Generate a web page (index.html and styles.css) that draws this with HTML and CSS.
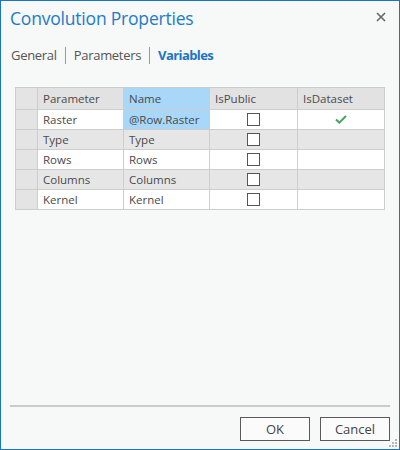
FILE: index.html
```html
<!DOCTYPE html>
<html>
<head>
<meta charset="utf-8">
<link rel="stylesheet" href="styles.css">
</head>
<body>
<div class="window">
  <div class="titlebar">
    <div class="title">Convolution Properties</div>
    <svg class="close" width="10" height="10" viewBox="0 0 10 10"><path d="M1 1L9 9M9 1L1 9" stroke="#666" stroke-width="1.6"/></svg>
  </div>
  <div class="tabs">
    <span class="tab">General</span>
    <span class="sep"></span>
    <span class="tab">Parameters</span>
    <span class="sep"></span>
    <span class="tab active">Variables</span>
  </div>
  <div class="gridwrap">
    <table class="grid">
      <thead>
        <tr><th class="rh"></th><th>Parameter</th><th class="sel">Name</th><th>IsPublic</th><th>IsDataset</th></tr>
      </thead>
      <tbody>
        <tr><td class="rh"></td><td>Raster</td><td class="sel">@Row.Raster</td><td class="c"><span class="cb"></span></td><td class="c"><svg width="12" height="9" viewBox="0 0 12 9"><path d="M1 4.5L4.3 7.6L11 1" fill="none" stroke="#4aa05e" stroke-width="2"/></svg></td></tr>
        <tr class="alt"><td class="rh"></td><td>Type</td><td>Type</td><td class="c"><span class="cb"></span></td><td></td></tr>
        <tr><td class="rh"></td><td>Rows</td><td>Rows</td><td class="c"><span class="cb"></span></td><td></td></tr>
        <tr class="alt"><td class="rh"></td><td>Columns</td><td>Columns</td><td class="c"><span class="cb"></span></td><td></td></tr>
        <tr><td class="rh"></td><td>Kernel</td><td>Kernel</td><td class="c"><span class="cb"></span></td><td></td></tr>
      </tbody>
    </table>
  </div>
  <div class="spacer"></div>
  <div class="divider"></div>
  <div class="footer">
    <button class="btn">OK</button>
    <button class="btn">Cancel</button>
  </div>
  <svg class="grip" width="9" height="9" viewBox="0 0 9 9">
    <rect x="6" y="0" width="2" height="2" fill="#b8b8b8"/>
    <rect x="3" y="3" width="2" height="2" fill="#b8b8b8"/>
    <rect x="6" y="3" width="2" height="2" fill="#b8b8b8"/>
    <rect x="0" y="6" width="2" height="2" fill="#b8b8b8"/>
    <rect x="3" y="6" width="2" height="2" fill="#b8b8b8"/>
    <rect x="6" y="6" width="2" height="2" fill="#b8b8b8"/>
  </svg>
</div>
</body>
</html>
```
FILE: styles.css
```css
* { box-sizing: border-box; }
html, body { margin: 0; padding: 0; }
body { font-family: "Open Sans", "Noto Sans", sans-serif; color: #3c3c3c; }
.window {
  position: relative;
  width: 400px;
  height: 450px;
  border: 1px solid #1b74c5;
  background: #f7f8f8;
  display: flex;
  flex-direction: column;
}
.titlebar {
  display: flex;
  justify-content: space-between;
  align-items: center;
  padding: 3px 13px 0 9px;
  height: 30px;
}
.title {
  font-size: 17.5px;
  color: #1d7cc9;
  letter-spacing: -0.2px;
}
.close { margin-top: -2px; }
.tabs {
  display: flex;
  align-items: center;
  padding: 12px 0 0 10px;
  height: 36px;
  font-size: 13px;
  color: #555;
}
.tab { letter-spacing: -0.3px; }
.tab.active { color: #1b74c5; font-weight: bold; letter-spacing: -0.6px; }
.sep {
  width: 1px;
  height: 17px;
  background: #9a9a9a;
  margin: 0 8px;
}
.gridwrap { padding: 20px 0 0 14px; }
.grid {
  border-collapse: collapse;
  border: 1px solid #c8c8c8;
  font-size: 11.5px;
  color: #4a4a4a;
  table-layout: fixed;
  width: 370px;
}
.grid th, .grid td {
  border: 1px solid #cdcdcd;
  padding: 0 0 0 5px;
  text-align: left;
  font-weight: normal;
  height: 20px;
  white-space: nowrap;
  overflow: hidden;
}
.grid th { height: 22px; background: #e2e2e2; }
.grid th:nth-child(1) { width: 22px; }
.grid th:nth-child(2) { width: 86px; }
.grid th:nth-child(3) { width: 86px; }
.grid th:nth-child(4) { width: 88px; }
.grid td { background: #fff; }
.grid tr.alt td { background: #e6e6e7; }
.grid .rh, .grid tr.alt .rh, .grid th.rh { background: #e4e4e4; }
.grid .sel, .grid th.sel { background: #a8d7f7; }
.grid td.c { text-align: center; padding: 0; line-height: 0; }
.cb {
  display: inline-block;
  width: 13px;
  height: 13px;
  border: 1px solid #555;
  background: #fff;
}
.spacer { flex: 1; }
.divider {
  margin: 0 9px 0 9px;
  height: 2px;
  background: #cbcbcb;
}
.footer {
  display: flex;
  justify-content: flex-end;
  gap: 10px;
  padding: 10px 9px 8px 0;
}
.btn {
  width: 70px;
  height: 24px;
  border: 1px solid #5a5a5a;
  background: #fbfbfb;
  font-family: "Open Sans", "Noto Sans", sans-serif;
  font-size: 13px;
  color: #444;
  padding: 0;
}
.grip { position: absolute; right: 1px; bottom: 1px; }
```
